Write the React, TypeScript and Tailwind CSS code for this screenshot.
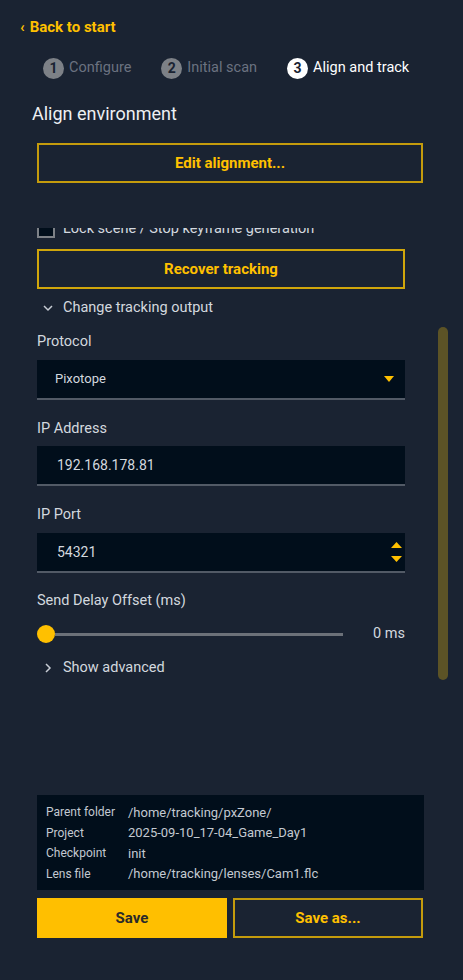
import React from 'react';

const yellow = 'text-[#ffc000]';

const ChevronDown = () => (
  <svg width="12" height="12" viewBox="0 0 12 12" className="shrink-0">
    <polyline points="2,4 6,8 10,4" fill="none" stroke="#c7ccd4" strokeWidth="1.5" />
  </svg>
);

const ChevronRight = () => (
  <svg width="12" height="12" viewBox="0 0 12 12" className="shrink-0">
    <polyline points="4,2 8,6 4,10" fill="none" stroke="#c7ccd4" strokeWidth="1.5" />
  </svg>
);

const Step: React.FC<{ n: number; label: string; active?: boolean }> = ({ n, label, active }) => (
  <div className="flex items-center gap-[5px]">
    <div
      className={`w-[21px] h-[21px] rounded-full flex items-center justify-center text-[14px] font-bold ${
        active ? 'bg-white text-[#1a2332]' : 'bg-[#7d8187] text-[#1a2332]'
      }`}
    >
      {n}
    </div>
    <span className={`text-[14.5px] ${active ? 'text-white' : 'text-[#6b7280]'}`}>{label}</span>
  </div>
);

const Field: React.FC<{ label: string; children: React.ReactNode; mt: string; gap: string }> = ({
  label,
  children,
  mt,
  gap,
}) => (
  <div className={mt}>
    <div className="h-5 flex items-center text-[14.5px] text-[#d3d8df]">{label}</div>
    <div className={gap}>{children}</div>
  </div>
);

const infoRows = [
  ['Parent folder', '/home/tracking/pxZone/'],
  ['Project', '2025-09-10_17-04_Game_Day1'],
  ['Checkpoint', 'init'],
  ['Lens file', '/home/tracking/lenses/Cam1.flc'],
];

export default function App() {
  return (
    <div className="w-[463px] h-[980px] bg-[#1a2332] font-['Roboto',sans-serif] flex flex-col overflow-hidden">
      {/* back link */}
      <div className={`pt-[18px] pl-5 h-[36px] flex items-center text-[15px] font-bold ${yellow}`}>
        <span className="mr-[5px]">‹</span>Back to start
      </div>

      {/* steps */}
      <div className="mt-[21px] pl-[43px] flex items-center gap-[30px] h-[22px]">
        <Step n={1} label="Configure" />
        <Step n={2} label="Initial scan" />
        <Step n={3} label="Align and track" active />
      </div>

      <h1 className="mt-[22px] pl-[32px] h-[24px] flex items-center text-[18px] text-[#eef0f3]">
        Align environment
      </h1>

      <button
        className={`mt-[18px] ml-[37px] w-[386px] h-10 border-2 border-[#c49b0c] text-[15px] font-bold ${yellow}`}
      >
        Edit alignment...
      </button>

      {/* scrolled area */}
      <div className="mt-[45px] h-[557px] flex overflow-hidden">
        <div className="ml-[37px] w-[368px] flex flex-col -mt-[8px]">
          <div className="h-[18px] flex items-center gap-[8px]">
            <div className="w-[18px] h-[18px] border-2 border-[#7d8187] bg-[#010e1b]" />
            <span className="text-[14.5px] text-[#d3d8df]">Lock scene / Stop keyframe generation</span>
          </div>

          <button className={`mt-[11px] h-10 border-2 border-[#d0a60b] text-[15px] font-bold ${yellow}`}>
            Recover tracking
          </button>

          <div className="mt-[9px] h-5 flex items-center gap-[9px] pl-[5px] text-[14.5px] text-[#d3d8df]">
            <ChevronDown />
            Change tracking output
          </div>

          <Field label="Protocol" mt="mt-[14px]" gap="mt-[8px]">
            <div className="h-10 bg-[#010e1b] border-b-2 border-[#525a66] flex items-center justify-between pl-[18px] pr-[11px]">
              <span className="text-[13px] text-[#d3d8df]">Pixotope</span>
              <svg width="10" height="6" viewBox="0 0 10 6">
                <polygon points="0,0 10,0 5,6" fill="#ffc000" />
              </svg>
            </div>
          </Field>

          <Field label="IP Address" mt="mt-[19px]" gap="mt-[7px]">
            <div className="h-10 bg-[#010e1b] border-b-2 border-[#525a66] flex items-center pl-[20px]">
              <span className="text-[14px] text-[#d3d8df]">192.168.178.81</span>
            </div>
          </Field>

          <Field label="IP Port" mt="mt-[19px]" gap="mt-[8px]">
            <div className="h-10 bg-[#010e1b] border-b-2 border-[#525a66] flex items-center justify-between pl-[20px] pr-[3px]">
              <span className="text-[14px] text-[#d3d8df]">54321</span>
              <div className="flex flex-col gap-[8px]">
                <svg width="11" height="6" viewBox="0 0 11 6">
                  <polygon points="5.5,0 11,6 0,6" fill="#ffc000" />
                </svg>
                <svg width="11" height="6" viewBox="0 0 11 6">
                  <polygon points="0,0 11,0 5.5,6" fill="#ffc000" />
                </svg>
              </div>
            </div>
          </Field>

          <Field label="Send Delay Offset (ms)" mt="mt-[18px]" gap="mt-[13px]">
            <div className="h-5 flex items-center">
              <div className="w-[306px] flex items-center">
                <div className="w-[18px] h-[18px] rounded-full bg-[#ffc000] shrink-0" />
                <div className="flex-1 h-[3px] bg-[#6c7179]" />
              </div>
              <span className="ml-auto text-[14.5px] text-[#d3d8df]">0 ms</span>
            </div>
          </Field>

          <div className="mt-[14px] h-5 flex items-center gap-[9px] pl-[5px] text-[14.5px] text-[#d3d8df]">
            <ChevronRight />
            Show advanced
          </div>
        </div>

        {/* scrollbar */}
        <div className="ml-[33px] w-[10px]">
          <div className="mt-[99px] h-[353px] rounded-full bg-[#5c5326]" />
        </div>
      </div>

      {/* project info */}
      <div className="mt-[10px] ml-[37px] w-[387px] h-[95px] bg-[#010e1b] pt-[7px] pl-[9px]">
        {infoRows.map(([k, v]) => (
          <div key={k} className="h-[20.5px] flex items-center text-[#c3c9d1]">
            <span className="w-[82px] shrink-0 text-[12px]">{k}</span>
            <span className="text-[13px]">{v}</span>
          </div>
        ))}
      </div>

      <div className="mt-[8px] ml-[37px] w-[386px] flex gap-[6px]">
        <button className="w-[190px] h-10 bg-[#ffbf00] text-[15px] font-bold text-[#2a2a2a]">Save</button>
        <button className={`w-[190px] h-10 border-2 border-[#c49b0c] text-[15px] font-bold ${yellow}`}>
          Save as...
        </button>
      </div>
    </div>
  );
}
